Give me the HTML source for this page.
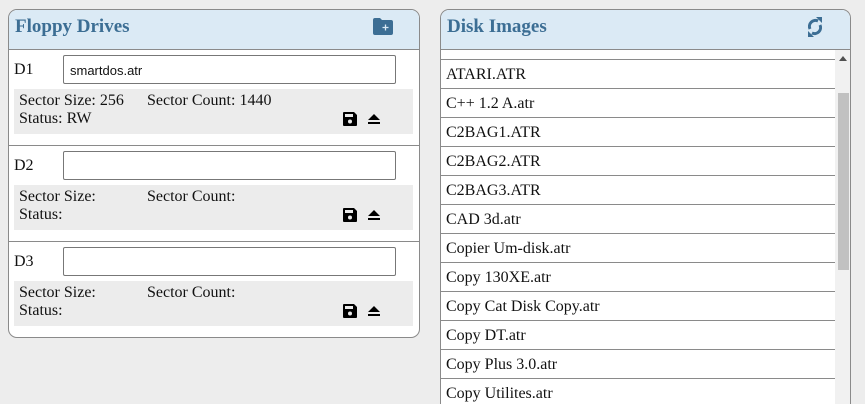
<!DOCTYPE html>
<html style="height:404px;overflow:hidden"><head><style>
body{margin:0;width:865px;height:404px;background:#ededed;overflow:hidden;position:relative;font-family:"Liberation Serif",serif;font-size:16px;color:#111}
.panel{position:absolute;background:#fff;border:1px solid #8a8a8a;border-radius:9px;overflow:hidden;box-sizing:border-box}
.hdr{position:absolute;left:0;top:0;right:0;height:39px;background:#dbeaf5;border-bottom:1px solid #8a8a8a}
.hdr span{position:absolute;left:6px;top:6px;font-weight:bold;font-size:19px;color:#3c6e94}
.lbl{position:absolute;left:5px}
.inp{position:absolute;left:54px;width:333px;height:29px;box-sizing:border-box;border:1px solid #777;border-radius:2px;font-family:"Liberation Sans",sans-serif;font-size:13px;padding:7px 6px}
.grey{position:absolute;left:5px;width:399px;height:45px;background:#ececec}
.grey .t{position:absolute;left:5px;line-height:18px}
.sep{position:absolute;left:0;right:0;height:1px;background:#8a8a8a}
.row{position:absolute;left:0;width:394px;height:27px;padding-top:1px;border-top:1px solid #8a8a8a;padding-left:5px;line-height:28px;box-sizing:content-box}
</style></head><body>
<div class="panel" style="left:8px;top:9px;width:412px;height:329px">
 <div class="hdr"><span>Floppy Drives</span>
  <svg style="position:absolute;left:364px;top:8px" width="20" height="17" viewBox="0 0 20 17"><path d="M0 2a2 2 0 0 1 2-2h5l2 2h9a2 2 0 0 1 2 2v11a2 2 0 0 1-2 2H2a2 2 0 0 1-2-2z" fill="#3c6e94"/><path d="M12.5 6.5v6M9.5 9.5h6" stroke="#dbeaf5" stroke-width="1.3"/></svg>
 </div>
 <div class="lbl" style="top:51px">D1</div>
 <div class="inp" style="top:45px">smartdos.atr</div>
 <div class="grey" style="top:79px"><div class="t" style="top:3px">Sector Size: 256<span style="position:absolute;left:128px;white-space:nowrap">Sector Count: 1440</span></div><div class="t" style="top:21px">Status: RW</div>
 <svg style="position:absolute;left:329px;top:23px" width="14" height="14" viewBox="0 0 14 14"><path d="M0 1a1 1 0 0 1 1-1h10l3 3v10a1 1 0 0 1-1 1H1a1 1 0 0 1-1-1z" fill="#000"/><rect x="2" y="2" width="8" height="3" fill="#ececec"/><circle cx="7" cy="9.5" r="2" fill="#ececec"/></svg>
 <svg style="position:absolute;left:354px;top:25px" width="12" height="11" viewBox="0 0 12 11"><path d="M6 0L12 6H0z M0 8h12v2H0z" fill="#000"/></svg></div>
 <div class="sep" style="top:135px"></div>
 <div class="lbl" style="top:147px">D2</div>
 <div class="inp" style="top:141px"></div>
 <div class="grey" style="top:175px"><div class="t" style="top:3px">Sector Size:<span style="position:absolute;left:128px;white-space:nowrap">Sector Count:</span></div><div class="t" style="top:21px">Status:</div>
 <svg style="position:absolute;left:329px;top:23px" width="14" height="14" viewBox="0 0 14 14"><path d="M0 1a1 1 0 0 1 1-1h10l3 3v10a1 1 0 0 1-1 1H1a1 1 0 0 1-1-1z" fill="#000"/><rect x="2" y="2" width="8" height="3" fill="#ececec"/><circle cx="7" cy="9.5" r="2" fill="#ececec"/></svg>
 <svg style="position:absolute;left:354px;top:25px" width="12" height="11" viewBox="0 0 12 11"><path d="M6 0L12 6H0z M0 8h12v2H0z" fill="#000"/></svg></div>
 <div class="sep" style="top:231px"></div>
 <div class="lbl" style="top:243px">D3</div>
 <div class="inp" style="top:237px"></div>
 <div class="grey" style="top:271px"><div class="t" style="top:3px">Sector Size:<span style="position:absolute;left:128px;white-space:nowrap">Sector Count:</span></div><div class="t" style="top:21px">Status:</div>
 <svg style="position:absolute;left:329px;top:23px" width="14" height="14" viewBox="0 0 14 14"><path d="M0 1a1 1 0 0 1 1-1h10l3 3v10a1 1 0 0 1-1 1H1a1 1 0 0 1-1-1z" fill="#000"/><rect x="2" y="2" width="8" height="3" fill="#ececec"/><circle cx="7" cy="9.5" r="2" fill="#ececec"/></svg>
 <svg style="position:absolute;left:354px;top:25px" width="12" height="11" viewBox="0 0 12 11"><path d="M6 0L12 6H0z M0 8h12v2H0z" fill="#000"/></svg></div>
</div>

<div class="panel" style="left:440px;top:9px;width:411px;height:395px;border-bottom:none;border-radius:9px 9px 0 0">
 <div class="hdr"><span>Disk Images</span>
  <svg style="position:absolute;left:366px;top:6px" width="16" height="22" viewBox="0 0 16 22"><path d="M3 13a6 6 0 0 1 8-8" stroke="#3c6e94" stroke-width="3" fill="none"/><path d="M9 1h6v6z" fill="#3c6e94"/><path d="M13 9a6 6 0 0 1-8 8" stroke="#3c6e94" stroke-width="3" fill="none"/><path d="M7 21H1v-6z" fill="#3c6e94"/></svg>
 </div>
 <div class="row" style="top:49px">ATARI.ATR</div>
 <div class="row" style="top:78px">C++ 1.2 A.atr</div>
 <div class="row" style="top:107px">C2BAG1.ATR</div>
 <div class="row" style="top:136px">C2BAG2.ATR</div>
 <div class="row" style="top:165px">C2BAG3.ATR</div>
 <div class="row" style="top:194px">CAD 3d.atr</div>
 <div class="row" style="top:223px">Copier Um-disk.atr</div>
 <div class="row" style="top:252px">Copy 130XE.atr</div>
 <div class="row" style="top:281px">Copy Cat Disk Copy.atr</div>
 <div class="row" style="top:310px">Copy DT.atr</div>
 <div class="row" style="top:339px">Copy Plus 3.0.atr</div>
 <div class="row" style="top:368px">Copy Utilites.atr</div>
 <div style="position:absolute;left:394px;top:40px;width:15px;height:360px;background:#f1f1f1"></div>
 <div style="position:absolute;left:397px;top:83px;width:11px;height:177px;background:#c1c1c1"></div>
 <svg style="position:absolute;left:398px;top:46px" width="8" height="5"><path d="M4 0L8 5H0z" fill="#505050"/></svg>
</div>
</body></html>
